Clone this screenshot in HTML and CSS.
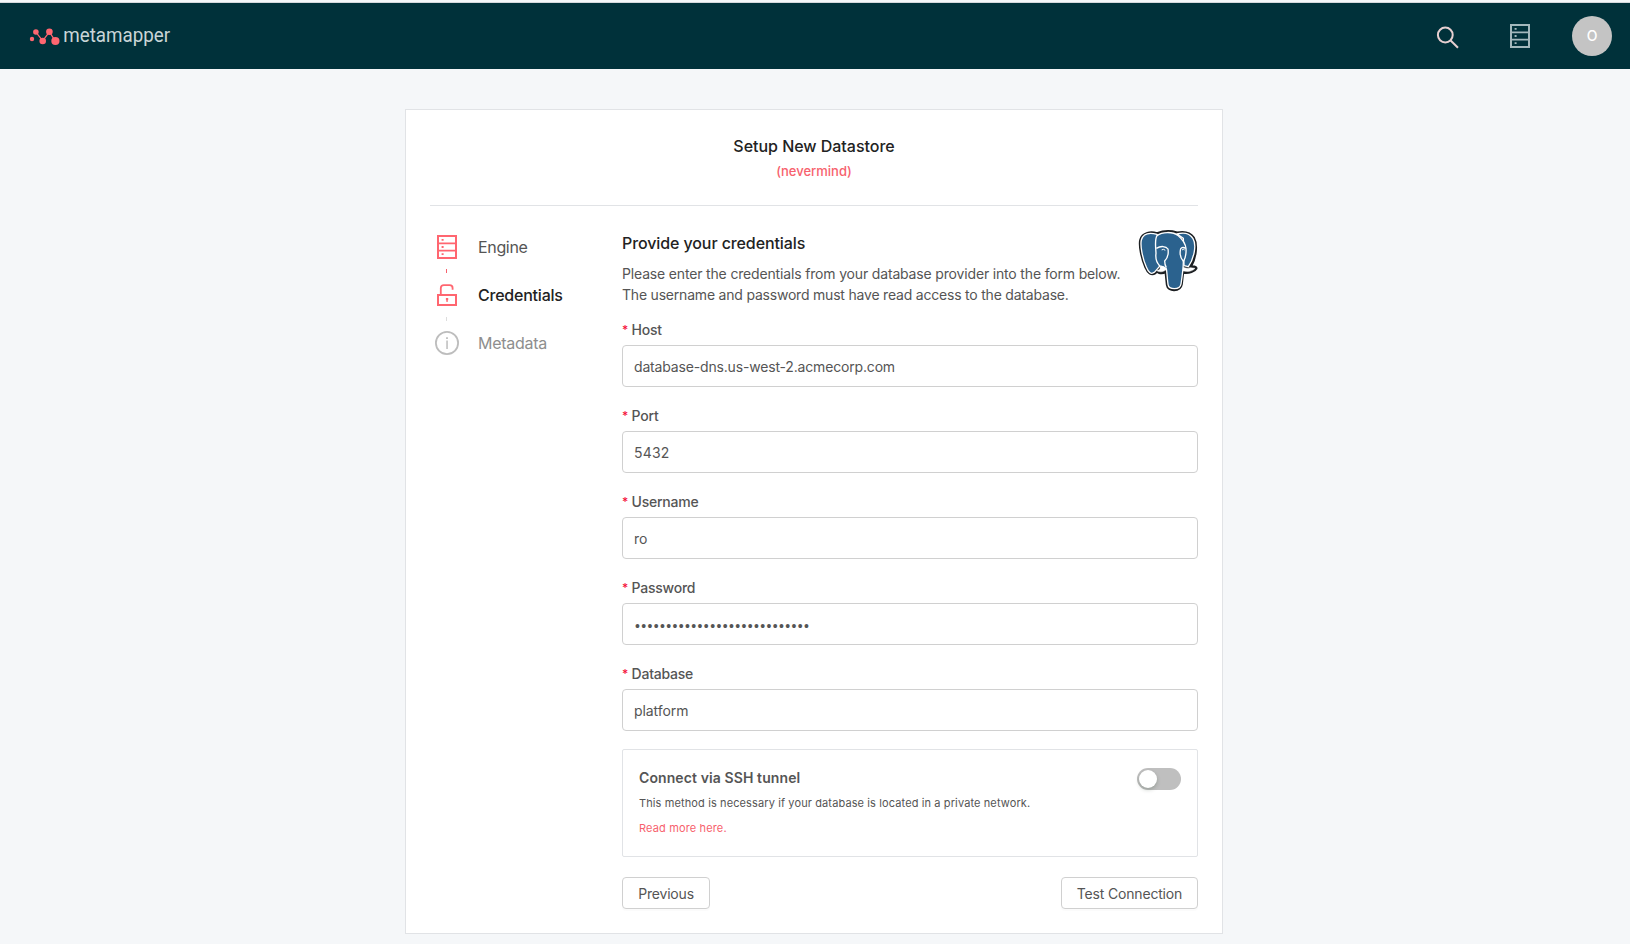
FILE: index.html
```html
<!DOCTYPE html>
<html lang="en">
<head>
<meta charset="utf-8">
<title>Metamapper</title>
<link rel="stylesheet" href="styles.css">
</head>
<body>
<svg class="sprite" aria-hidden="true">
  <symbol id="server" viewBox="0 0 20 24">
    <g fill="none" stroke="currentColor">
      <path stroke-width="2" d="M1 1H19V23H1Z"/>
      <path stroke-width="1.6" d="M1 8.4H19M1 15.6H19"/>
    </g>
    <path fill="currentColor" d="M4.6 4h2v1.8h-2zM4.6 11.1h2v1.8h-2zM4.6 18.2h2V20h-2z"/>
  </symbol>
</svg>
<header class="topbar">
  <a class="brand">
    <svg width="150" height="32" viewBox="0 -4 150 32">
      <g class="brand-mark">
        <path d="M6.7 7.8 13.7 16.8 20.4 7.8 26.3 17"/>
        <circle cx="3" cy="15" r="2.2"/><circle cx="6.9" cy="8" r="2.8"/><circle cx="13.7" cy="17" r="3.3"/><circle cx="20.4" cy="7.8" r="3.3"/><circle cx="26.4" cy="17" r="4.1"/>
      </g>
      <text class="brand-name" x="34.2" y="17.6" textLength="107" lengthAdjust="spacingAndGlyphs">metamapper</text>
    </svg>
  </a>
  <nav class="tools">
    <svg class="search" width="24" height="24" viewBox="0 0 24 24"><circle cx="9.3" cy="9" r="7.4"/><path d="M14.4 14.2 22 21.8"/></svg>
    <svg class="stores" width="20" height="24"><use href="#server"/></svg>
    <span class="avatar">O</span>
  </nav>
</header>
<main class="card">
  <div class="card-head">
    <h1>Setup New Datastore</h1>
    <a class="cancel">(nevermind)</a>
  </div>
  <div class="columns">
    <ol class="steps">
      <li class="step done"><svg width="24" height="24" viewBox="-2 0 24 24"><use href="#server" width="20" height="24"/></svg><span>Engine</span></li>
      <li class="step active"><svg width="24" height="24" viewBox="0 0 24 24"><g fill="none" stroke="currentColor"><path stroke-width="2" d="M3 12H21V22H3Z"/><path stroke-width="1.8" d="M5.8 12V5Q5.8 2.2 8.8 2.2H14.6Q17.6 2.2 17.6 5V6.8"/></g><path fill="currentColor" d="M10.9 15h2.3v2.1l-.5.3V19h-1.3v-1.6l-.5-.3z"/></svg><span>Credentials</span></li>
      <li class="step todo"><svg width="24" height="24" viewBox="0 0 24 24"><circle cx="12" cy="12" r="11.1" fill="none" stroke="currentColor" stroke-width="1.8"/><path fill="currentColor" d="M11.1 6.2h1.8v1.7h-1.8zM11.3 9.6h1.5v8.4h-1.5z"/></svg><span>Metadata</span></li>
    </ol>
    <section class="form">
      <div class="intro">
        <div>
          <h2>Provide your credentials</h2>
          <p>Please enter the credentials from your database provider into the form below.<br><span class="second">The username and password must have read access to the database.</span></p>
        </div>
        <svg class="elephant" width="60" height="62" viewBox="54 45 180 186">
          <path fill="#1c1f22" stroke="#1c1f22" stroke-width="7" stroke-linejoin="round" d="M111 55C94 50 67 51 61 75C57 92 65 132 77 158C83 173 94 182 105 175L112 168C112 174 126 177 137 171L141 210C143 230 181 231 185 208L189 173C208 176 224 169 229 160C229 154 219 155 213 154C226 132 234 91 221 68C210 51 187 50 171 53C152 47 127 49 111 55Z"/>
          <g fill="#2b628e" stroke="#fff" stroke-width="4" stroke-linejoin="round">
            <path d="M111 58C92 53 70 54 64 75C60 92 68 132 79 156C85 171 93 180 103 172L118 155L120 100L113 62Z"/>
            <path d="M171 57C187 52 208 53 219 71C231 91 221 132 205 155L192 152L190 70Z"/>
            <path d="M110 167C119 165 122 161 120 157Q123 151 131 154L140 162C131 172 120 172 110 167Z" fill="#fff" stroke-width="1.5"/>
            <path d="M189 157Q202 162 211 158L225 160C216 170 203 171 187 167Z" fill="#fff" stroke-width="1.5"/>
            <path d="M111 62C126 50 158 49 175 62C190 75 197 87 198 101C199 115 196 130 190 140C190 155 187 180 183 207C180 226 146 225 144 208C142 194 141 172 139 161Q132 154 120 153C109 143 106 130 108 115L107 99C106 83 106 70 111 62Z"/>
            <path fill="none" d="M109 100C122 92 138 93 144 102C146 115 142 130 134 138Q134 150 139 158M197 100C189 95 181 98 181 106C179 119 184 133 191 140"/>
          </g>
          <path fill="none" stroke="#fff" stroke-width="3" stroke-linecap="round" d="M126 104Q131 101 135 105M187 104Q190 101 193 104"/>
        </svg>
      </div>
      <div class="field"><label>Host</label><div class="input host">database-dns.us-west-2.acmecorp.com</div></div>
      <div class="field"><label>Port</label><div class="input port">5432</div></div>
      <div class="field"><label>Username</label><div class="input">ro</div></div>
      <div class="field"><label>Password</label><div class="input secret">••••••••••••••••••••••••••••</div></div>
      <div class="field"><label>Database</label><div class="input">platform</div></div>
      <div class="tunnel">
        <div>
          <h3>Connect via SSH tunnel</h3>
          <p>This method is necessary if your database is located in a private network.</p>
          <a>Read more here.</a>
        </div>
        <span class="switch"></span>
      </div>
      <div class="actions"><button>Previous</button><button class="test">Test Connection</button></div>
    </section>
  </div>
</main>
</body>
</html>
```

FILE: styles.css
```css
* { box-sizing: border-box; margin: 0; padding: 0; }
body {
  height: 944px;
  overflow: hidden;
  padding-top: 2px;
  background: #f5f7f9;
  color: #555;
  font: 14px/21px Inter, sans-serif;
}
.sprite { position: absolute; width: 0; height: 0; }
svg { display: block; flex: none; overflow: visible; }

.topbar {
  height: 67px;
  border-top: 1px solid #d5d8dc;
  background: #00313a;
  display: flex;
  justify-content: space-between;
  align-items: center;
  padding: 0 18px 0 29px;
}
.brand-mark { fill: #ff6670; }
.brand-mark path { fill: none; stroke: #ff6670; stroke-width: 1.3; }
.brand-name { font: 400 20.5px Roboto, sans-serif; fill: #c9d5d7; }
.tools { display: flex; align-items: center; }
.search { margin: 4px 50px 0 0; fill: none; stroke: #e6cfd0; stroke-width: 2; }
.stores { margin-right: 42px; color: #a3b8bc; }
.avatar {
  width: 40px;
  height: 40px;
  border-radius: 50%;
  background: #c4c4c4;
  color: #fff;
  font-weight: 500;
  line-height: 40px;
  text-align: center;
}

.card {
  width: 818px;
  height: 825px;
  margin: 40px 0 0 405px;
  padding: 0 24px;
  border: 1px solid #e1e3e6;
  background: #fff;
}
.card-head {
  height: 96px;
  border-bottom: 1px solid #e1e3e6;
  padding-top: 24px;
  text-align: center;
}
h1, h2 { color: #222; font-size: 16px; font-weight: 500; line-height: 24px; letter-spacing: -0.1px; }
h1 { letter-spacing: -0.03px; }
.cancel { display: block; margin-top: 3px; color: #f7616d; font-size: 13px; font-weight: 500; line-height: 21px; }

.columns { display: flex; }
.steps { width: 192px; padding: 29px 0 0 5px; list-style: none; }
.step { height: 48px; display: flex; gap: 19px; font-size: 16px; line-height: 24px; position: relative; letter-spacing: -0.34px; }
.step svg { color: #ff6670; }
.step:not(:last-child)::after {
  content: "";
  position: absolute;
  left: 11px;
  top: 34px;
  width: 1px;
  height: 4px;
  background: #f7616d;
}
.step.active { color: #222; font-weight: 500; letter-spacing: -0.22px; }
.step.active:not(:last-child)::after { background: #ddd; }
.step.todo { color: #8e8e8e; letter-spacing: -0.28px; }
.step.todo svg { color: #bdbdbd; }

.form { width: 576px; }
.intro { height: 112px; display: flex; justify-content: space-between; padding-top: 24px; }
.intro h2 { margin: 1px 0 8px; }
.intro p { white-space: nowrap; letter-spacing: -0.165px; }
.intro .second { letter-spacing: -0.205px; }
.elephant { margin: 0 0 0 -20px; }
.field { height: 86px; }
.field label { display: block; height: 27px; padding-top: 1px; line-height: 21px; font-weight: 500; letter-spacing: -0.24px; }
.field label::before { content: "*"; display: inline-block; width: 9.6px; color: #f5143c; font-size: 12px; line-height: 10px; vertical-align: 1px; }
.input {
  height: 42px;
  border: 1px solid #d0d0d0;
  border-radius: 4px;
  padding: 1px 11px 0;
  line-height: 40px;
  letter-spacing: -0.08px;
}
.host { letter-spacing: -0.17px; }
.port { letter-spacing: 0.2px; }
.secret { padding: 2px 0 0 12px; font-family: "Liberation Sans", sans-serif; letter-spacing: 1.36px; }

.tunnel {
  height: 108px;
  margin-top: 1px;
  border: 1px solid #e1e3e6;
  border-radius: 2px;
  padding: 18px 16px;
  display: flex;
  justify-content: space-between;
}
.tunnel h3 { margin-top: -1px; font-size: 14px; font-weight: 600; line-height: 21px; letter-spacing: 0.1px; }
.tunnel p { margin-top: 5px; font-size: 11px; line-height: 20px; letter-spacing: 0.115px; }
.tunnel a { display: block; margin-top: 5px; color: #f7616d; font-size: 11px; line-height: 20px; letter-spacing: 0.14px; }
.switch { width: 44px; height: 22px; border-radius: 11px; background: #bfbfbf; padding: 2px; }
.switch::before {
  content: "";
  display: block;
  width: 18px;
  height: 18px;
  border-radius: 50%;
  background: #fff;
  box-shadow: 0 2px 4px rgba(0, 35, 11, .2);
}
.actions { display: flex; justify-content: space-between; margin-top: 20px; }
.actions button {
  width: 88px;
  height: 32px;
  border: 1px solid #d0d0d0;
  border-radius: 4px;
  background: #fff;
  color: #555;
  font: 14px/30px Inter, sans-serif;
  letter-spacing: -0.18px;
  padding-top: 1px;
  white-space: nowrap;
  box-shadow: 0 2px 0 rgba(0, 0, 0, .015);
}
.actions .test { width: 137px; }
```
